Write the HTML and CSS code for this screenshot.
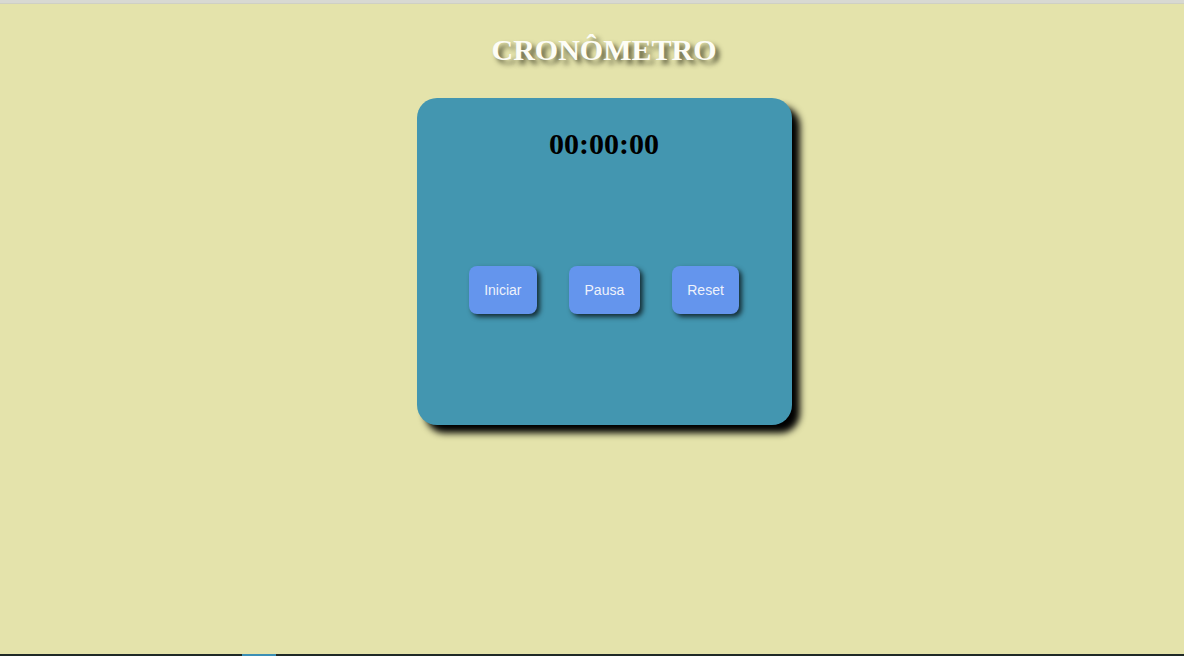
FILE: index.html
```html
<!DOCTYPE html>
<html lang="pt-BR">
<head>
<meta charset="utf-8">
<title>Cronômetro</title>
<link rel="stylesheet" href="styles.css">
</head>
<body>
<div class="topbar"></div>
<main class="page">
  <h1 class="title">CRONÔMETRO</h1>
  <section class="card">
    <div class="time">00:00:00</div>
    <div class="controls">
      <button class="btn">Iniciar</button>
      <button class="btn">Pausa</button>
      <button class="btn">Reset</button>
    </div>
  </section>
</main>
<div class="bottombar"><span class="task"></span></div>
</body>
</html>
```
FILE: styles.css
```css
html, body {
  margin: 0;
  padding: 0;
  height: 100%;
}
body {
  display: flex;
  flex-direction: column;
  background: #e4e3ab;
  font-family: "Liberation Serif", "Times New Roman", serif;
  overflow: hidden;
}
.topbar {
  height: 3px;
  background: #d8d9d2;
  border-bottom: 1px solid #cfd0c4;
  flex: none;
}
.page {
  flex: 1;
  display: flex;
  flex-direction: column;
  align-items: center;
  padding-left: 24px;
}
.title {
  margin: 29px 0 0;
  font-size: 30px;
  font-weight: bold;
  line-height: 34px;
  color: #fdfdf6;
  text-shadow: 4px 4px 5px rgba(40, 40, 20, 0.75);
}
.card {
  margin-top: 31px;
  width: 375px;
  height: 327px;
  box-sizing: border-box;
  background: #4396b0;
  border-radius: 20px;
  box-shadow: 8px 8px 7px #000;
  display: flex;
  flex-direction: column;
  align-items: center;
  padding-top: 29px;
}
.time {
  font-size: 30px;
  font-weight: bold;
  line-height: 34px;
  color: #000;
}
.controls {
  margin-top: 105px;
  display: flex;
  gap: 32px;
}
.btn {
  font-family: "Liberation Sans", Arial, sans-serif;
  font-size: 14px;
  line-height: 16px;
  padding: 16px 15px;
  border: none;
  border-radius: 8px;
  background: #6495ed;
  color: #eef2fb;
  box-shadow: 3px 3px 5px rgba(0, 0, 0, 0.7);
}
.btn:nth-child(2) {
  padding: 16px 16px;
}
.bottombar {
  height: 2px;
  flex: none;
  background: #1f2a26;
  position: relative;
}
.task {
  position: absolute;
  left: 242px;
  top: 0;
  width: 34px;
  height: 2px;
  background: #3b8fb5;
}
```
